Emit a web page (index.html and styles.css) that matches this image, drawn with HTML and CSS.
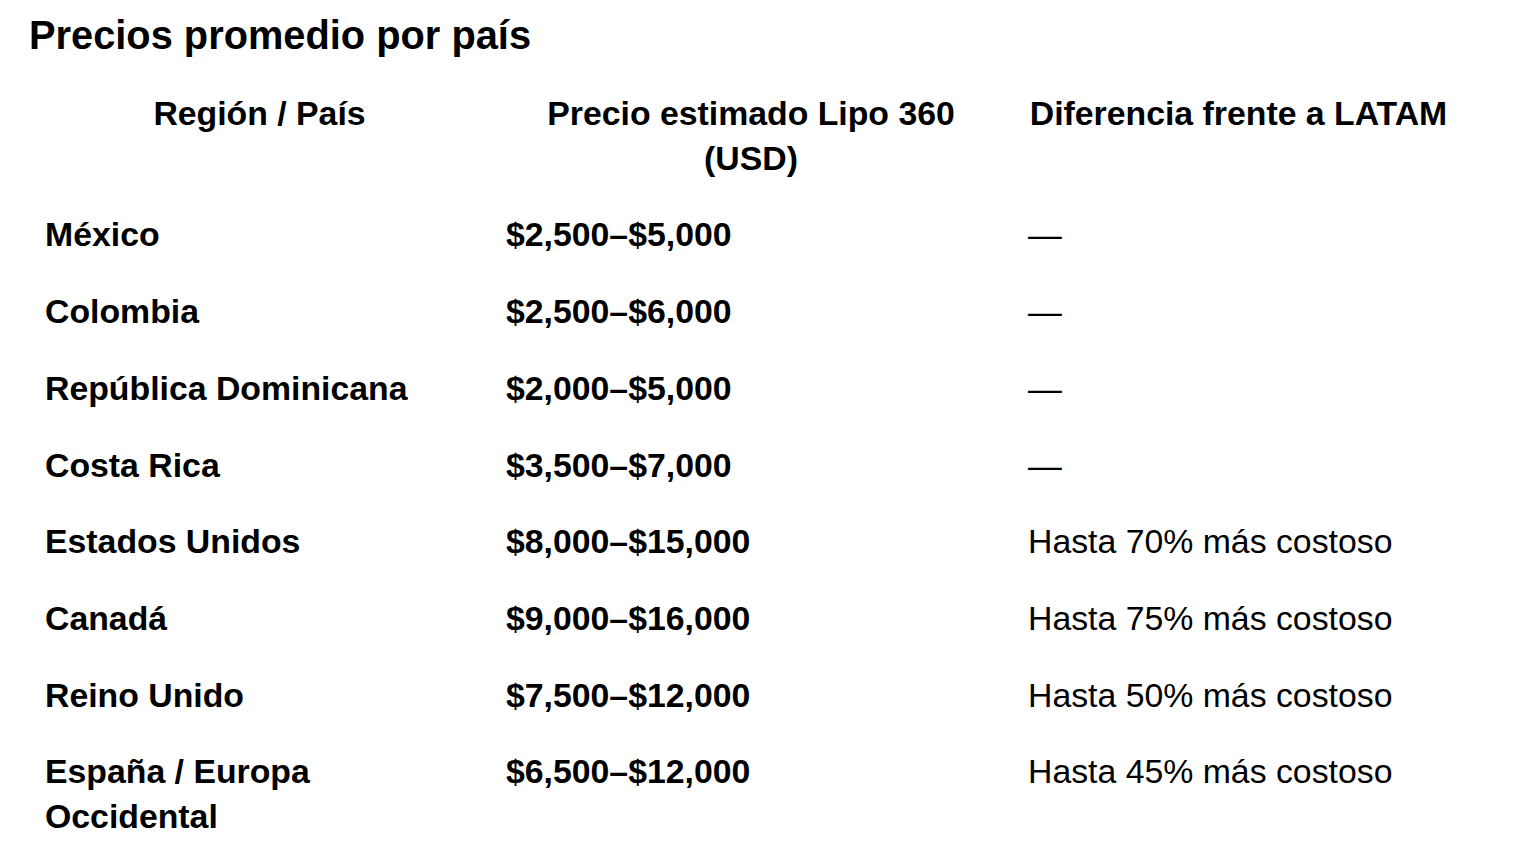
FILE: index.html
```html
<!DOCTYPE html>
<html lang="es">
<head>
<meta charset="utf-8">
<title>Precios promedio por país</title>
<link rel="stylesheet" href="styles.css">
</head>
<body>
<main class="page">
  <h1 class="title">Precios promedio por país</h1>
  <table class="prices">
    <colgroup>
      <col class="c1">
      <col class="c2">
      <col class="c3">
    </colgroup>
    <thead>
      <tr>
        <th>Región / País</th>
        <th>Precio estimado Lipo 360 (USD)</th>
        <th>Diferencia frente a LATAM</th>
      </tr>
    </thead>
    <tbody>
      <tr><td class="country">México</td><td class="price">$2,500–$5,000</td><td class="diff">—</td></tr>
      <tr><td class="country">Colombia</td><td class="price">$2,500–$6,000</td><td class="diff">—</td></tr>
      <tr><td class="country">República Dominicana</td><td class="price">$2,000–$5,000</td><td class="diff">—</td></tr>
      <tr><td class="country">Costa Rica</td><td class="price">$3,500–$7,000</td><td class="diff">—</td></tr>
      <tr><td class="country">Estados Unidos</td><td class="price">$8,000–$15,000</td><td class="diff">Hasta 70% más costoso</td></tr>
      <tr><td class="country">Canadá</td><td class="price">$9,000–$16,000</td><td class="diff">Hasta 75% más costoso</td></tr>
      <tr><td class="country">Reino Unido</td><td class="price">$7,500–$12,000</td><td class="diff">Hasta 50% más costoso</td></tr>
      <tr><td class="country">España / Europa Occidental</td><td class="price">$6,500–$12,000</td><td class="diff">Hasta 45% más costoso</td></tr>
    </tbody>
  </table>
</main>
</body>
</html>
```

FILE: styles.css
```css
html, body {
  margin: 0;
  padding: 0;
  background: #ffffff;
}

body {
  font-family: "Liberation Sans", Arial, Helvetica, sans-serif;
  color: #000000;
}

.page {
  padding: 12px 0 0 29px;
}

.title {
  margin: 0 0 17px 0;
  font-size: 39.8px;
  line-height: 46px;
  font-weight: 700;
}

.prices {
  border-collapse: collapse;
  table-layout: fixed;
  width: 1436px;
  font-size: 33.8px;
  line-height: 44.7px;
}

.c1 { width: 461px; }
.c2 { width: 522px; }
.c3 { width: 453px; }

.prices th,
.prices td {
  padding: 16px 16px;
  vertical-align: top;
}

.prices th {
  font-weight: 700;
  text-align: center;
}

.prices td {
  text-align: left;
}

.country,
.price {
  font-weight: 700;
}

.diff {
  font-weight: 400;
}
```
